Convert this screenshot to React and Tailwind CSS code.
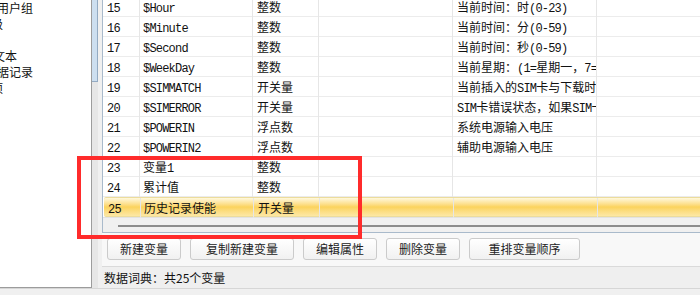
import React from 'react';

const treeLines = [
  { text: '用户组', ml: '-ml-[3px]' },
  { text: '等级', ml: '-ml-[21px]' },
  { text: '', ml: '' },
  { text: '文本', ml: '-ml-[7px]' },
  { text: '数据记录', ml: '-ml-[15px]' },
  { text: '事项', ml: '-ml-[21px]' },
];

const rows = [
  ['15', '$Hour', '整数', '当前时间：时(0-23)'],
  ['16', '$Minute', '整数', '当前时间：分(0-59)'],
  ['17', '$Second', '整数', '当前时间：秒(0-59)'],
  ['18', '$WeekDay', '整数', '当前星期：(1=星期一，7=星期日)'],
  ['19', '$SIMMATCH', '开关量', '当前插入的SIM卡与下载时的SIM卡是否一致'],
  ['20', '$SIMERROR', '开关量', 'SIM卡错误状态，如果SIM卡不存在则为1'],
  ['21', '$POWERIN', '浮点数', '系统电源输入电压'],
  ['22', '$POWERIN2', '浮点数', '辅助电源输入电压'],
  ['23', '变量1', '整数', ''],
  ['24', '累计值', '整数', ''],
  ['25', '历史记录使能', '开关量', ''],
];

const buttons = [
  { label: '新建变量', w: 'w-[74px]' },
  { label: '复制新建变量', w: 'w-[104px]' },
  { label: '编辑属性', w: 'w-[74px]' },
  { label: '删除变量', w: 'w-[74px]' },
  { label: '重排变量顺序', w: 'w-[111px]' },
];

// ascii runs get the narrow mono face, CJK stays on Noto
const Mixed = ({ text }) =>
  text
    .split(/([\x20-\x7e]+)/)
    .filter(Boolean)
    .map((part, i) =>
      /^[\x20-\x7e]+$/.test(part) ? (
        <span key={i} className="font-['Liberation_Mono',monospace] tracking-[-0.8px]">
          {part}
        </span>
      ) : (
        <span key={i}>{part}</span>
      )
    );

const Row = ({ cells, selected }) => {
  const [num, name, type, desc] = cells;
  const base = 'h-[20px] leading-[19px] whitespace-nowrap overflow-hidden border-r border-[#e6e6e6]';
  return (
    <div
      className={
        selected
          ? 'flex h-[20px] border-y border-[#ecdc9c] bg-linear-to-b from-[#fff8dc] via-[#fbd35c] to-[#fde8a4] rounded-l-[2px] ml-[1px]'
          : 'flex h-[20px] border-b border-[#ececec]'
      }
    >
      <div className={`${base} w-[37px] pl-[4px]`}>
        <Mixed text={num} />
      </div>
      <div className={`${base} w-[113px] pl-[3px]`}>
        <Mixed text={name} />
      </div>
      <div className={`${base} w-[66px] pl-[4px]`}>
        <Mixed text={type} />
      </div>
      <div className={`${base} w-[134px]`} />
      <div className={`${base} w-[144px] pl-[4px]`}>
        <Mixed text={desc} />
      </div>
      <div className="flex-1" />
    </div>
  );
};

const App = () => {
  return (
    <div className="relative w-[700px] h-[295px] overflow-hidden bg-[#f0f0f0] text-[12px] text-[#111] font-['Noto_Sans_CJK_SC',sans-serif]">
      <div className="flex h-[289px] border-b border-[#d6d6d6]">
        {/* tree pane, scrolled to the right */}
        <div className="w-[92px] shrink-0 bg-white border-r border-[#9c9c9c] border-b overflow-hidden">
          {treeLines.map((line, i) => (
            <div key={i} className={`h-[16px] leading-[16px] whitespace-nowrap ${line.ml}`}>
              {line.text}
            </div>
          ))}
        </div>

        {/* tree scrollbar */}
        <div className="w-[6px] shrink-0 bg-[#e6e6e6]">
          <div className="h-[82px] bg-[#cddff0] border-r border-b border-[#93aac2]" />
        </div>

        <div className="flex-1 min-w-0 flex flex-col pl-[4px]">
          {/* variable table */}
          <div className="-mt-[3px] bg-white border-l border-b border-[#a9bacb]">
            {rows.map((r, i) => (
              <Row key={r[0]} cells={r} selected={i === rows.length - 1} />
            ))}
            <div className="h-[15px] bg-[#f0f0f0] border-t border-[#e2e2e2] pt-[7px]">
              <div className="h-[2px] ml-[15px] bg-[#8c8c8c]" />
            </div>
          </div>

          {/* actions */}
          <div className="flex gap-[9px] pl-[5px] pt-[5px] pb-[6px] bg-[#f8f8f8] border-b border-[#dadada]">
            {buttons.map((b) => (
              <button
                key={b.label}
                className={`${b.w} h-[22px] rounded-[3px] border border-[#cbcbcb] bg-linear-to-b from-[#ffffff] to-[#f1f1f1] text-[12px] leading-[20px] text-[#222]`}
              >
                {b.label}
              </button>
            ))}
          </div>

          {/* status */}
          <div className="flex-1 flex items-center pl-[2px] bg-[#efefef]">数据词典：共25个变量</div>
        </div>
      </div>

      {/* red annotation box */}
      <div className="absolute left-[77px] top-[156px] w-[285px] h-[83px] border-4 border-[#ff2b2b]" />
    </div>
  );
};

export default App;
